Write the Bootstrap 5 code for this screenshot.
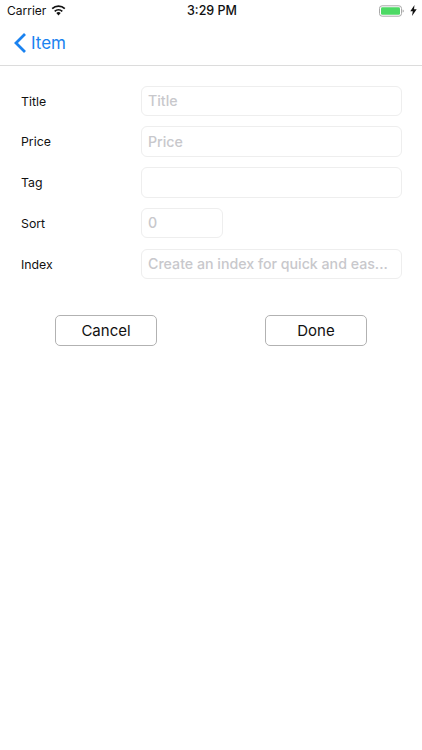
<!DOCTYPE html>
<html lang="en">
<head>
<meta charset="utf-8">
<title>Item</title>
<link href="https://cdn.jsdelivr.net/npm/bootstrap@5.3.0/dist/css/bootstrap.min.css" rel="stylesheet">
<style>
html, body { height: 100%; }
body { font-family: Inter, "Liberation Sans", sans-serif; background: #fff; color: #111; overflow: hidden; }
.status-strip { height: 21px; padding: 0 5px 0 7px; font-size: 12px; line-height: 21px; }
.status-side { flex: 1 1 0; }
.status-time { font-weight: 500; font-size: 12.5px; }
.nav-strip { height: 45px; border-bottom: 1px solid #dcdcdc; padding-left: 13px; color: #1a82f0; font-size: 17px; gap: 4px; }
.back-link { color: #1a82f0; text-decoration: none; padding-top: 2px; }
.wifi-icon { margin-left: -3px; }
.battery-gap { gap: 6px; }
.form-area { padding: 19.5px 20px 0 21px; gap: 10.3px; }
.field-row { height: 30.5px; }
.field-name { width: 120px; flex: none; font-size: 12.3px; padding-top: 2px; }
.field-box { height: 30.5px; border: 1px solid #eeeeee; border-radius: 6px; padding: 0 6px 1px; font-size: 14.2px; box-shadow: none; color: #111; font-weight: 500; }
.field-box::placeholder { color: #c8c8cc; opacity: 1; }
.field-short { width: 82px; flex: none; }
.action-row { padding: 0 55px; margin-top: 35.500px; }
.action-btn { width: 102px; height: 31px; padding: 0; border: 1px solid #b2b2b2; border-radius: 5px; background: #fff; color: #111; font-size: 15px; line-height: 1; }
</style>
</head>
<body>
<div class="status-strip d-flex align-items-center">
  <div class="status-side d-flex align-items-center gap-2">
    <span>Carrier</span>
    <svg class="wifi-icon" width="15" height="11" viewBox="0 0 15 11" aria-hidden="true"><path d="M7.5 10.6 5.3 8a3.2 3.2 0 0 1 4.4 0Z" fill="#111"/><path d="M3.7 6.3a5.6 5.6 0 0 1 7.6 0" fill="none" stroke="#111" stroke-width="1.7"/><path d="M1.2 3.6a9.2 9.2 0 0 1 12.6 0" fill="none" stroke="#111" stroke-width="1.7"/></svg>
  </div>
  <span class="status-time">3:29 PM</span>
  <div class="status-side battery-gap d-flex align-items-center justify-content-end">
    <svg width="25" height="12" viewBox="0 0 25 12" aria-hidden="true"><rect x=".5" y=".8" width="22" height="10.4" rx="2.6" fill="#fff" stroke="#a8a8a8"/><rect x="2" y="2.2" width="19" height="7.6" rx="1.3" fill="#4cd964"/><path d="M23.600 4.500c.8.2 1.200.7 1.200 1.500s-.4 1.300-1.200 1.500Z" fill="#a8a8a8"/></svg>
    <svg width="7" height="11" viewBox="0 0 7 11" aria-hidden="true"><path d="M4.500 0 .3 6.300h2.500L2 11l4.700-6.700H4Z" fill="#111"/></svg>
  </div>
</div>
<div class="nav-strip d-flex align-items-center">
  <svg width="14" height="22" viewBox="0 0 14 22" aria-hidden="true"><path d="M12 2 3 11l9 9" fill="none" stroke="#1a82f0" stroke-width="2.800"/></svg>
  <a class="back-link" href="#">Item</a>
</div>
<form class="form-area d-flex flex-column">
  <div class="field-row d-flex align-items-center"><label class="field-name" for="f1">Title</label><input id="f1" class="form-control field-box" placeholder="Title"></div>
  <div class="field-row d-flex align-items-center"><label class="field-name" for="f2">Price</label><input id="f2" class="form-control field-box" placeholder="Price"></div>
  <div class="field-row d-flex align-items-center"><label class="field-name" for="f3">Tag</label><input id="f3" class="form-control field-box"></div>
  <div class="field-row d-flex align-items-center"><label class="field-name" for="f4">Sort</label><input id="f4" class="form-control field-box field-short" placeholder="0"></div>
  <div class="field-row d-flex align-items-center"><label class="field-name" for="f5">Index</label><input id="f5" class="form-control field-box" placeholder="Create an index for quick and eas..."></div>
</form>
<div class="action-row d-flex justify-content-between">
  <button type="button" class="btn action-btn">Cancel</button>
  <button type="button" class="btn action-btn">Done</button>
</div>
<script src="https://cdn.jsdelivr.net/npm/bootstrap@5.3.0/dist/js/bootstrap.bundle.min.js"></script>
</body>
</html>
